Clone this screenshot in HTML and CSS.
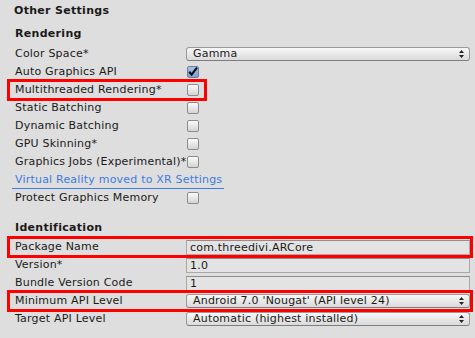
FILE: index.html
```html
<!DOCTYPE html>
<html lang="en">
  <head>
    <meta charset="UTF-8" />
    <meta name="viewport" content="width=device-width, initial-scale=1.0" />
    <title>Player Settings - Other Settings</title>
    <link rel="stylesheet" href="styles.css">
  </head>
  <body>
    <div class="panel">
      <div class="title">Other Settings</div>

      <div class="section-title first">Rendering</div>

      <div class="row">
        <span class="label">Color Space*</span>
        <div class="dropdown">
          <span>Gamma</span>
          <svg class="arrows" width="5" height="8" viewBox="0 0 5 8"><path d="M2.5 0 L5 3 L0 3 Z M0 5 L5 5 L2.5 8 Z" fill="#222"/></svg>
        </div>
      </div>
      <div class="row">
        <span class="label">Auto Graphics API</span>
        <span class="checkbox checked">
          <svg width="12" height="12" viewBox="0 0 12 12"><path d="M2.2 5.8 L4.6 8.6 L10 1.6" fill="none" stroke="#111" stroke-width="2.2"/></svg>
        </span>
      </div>
      <div class="row mark short">
        <span class="label">Multithreaded Rendering*</span>
        <span class="checkbox"></span>
      </div>
      <div class="row">
        <span class="label">Static Batching</span>
        <span class="checkbox"></span>
      </div>
      <div class="row">
        <span class="label">Dynamic Batching</span>
        <span class="checkbox"></span>
      </div>
      <div class="row">
        <span class="label">GPU Skinning*</span>
        <span class="checkbox"></span>
      </div>
      <div class="row">
        <span class="label">Graphics Jobs (Experimental)*</span>
        <span class="checkbox"></span>
      </div>
      <div class="row">
        <a class="link" href="#">Virtual Reality moved to XR Settings</a>
      </div>
      <div class="row">
        <span class="label">Protect Graphics Memory</span>
        <span class="checkbox"></span>
      </div>

      <div class="section-title">Identification</div>

      <div class="row mark">
        <span class="label">Package Name</span>
        <div class="textfield">com.threedivi.ARCore</div>
      </div>
      <div class="row">
        <span class="label">Version*</span>
        <div class="textfield">1.0</div>
      </div>
      <div class="row">
        <span class="label">Bundle Version Code</span>
        <div class="textfield">1</div>
      </div>
      <div class="row mark">
        <span class="label">Minimum API Level</span>
        <div class="dropdown">
          <span>Android 7.0 'Nougat' (API level 24)</span>
          <svg class="arrows" width="5" height="8" viewBox="0 0 5 8"><path d="M2.5 0 L5 3 L0 3 Z M0 5 L5 5 L2.5 8 Z" fill="#222"/></svg>
        </div>
      </div>
      <div class="row">
        <span class="label">Target API Level</span>
        <div class="dropdown">
          <span>Automatic (highest installed)</span>
          <svg class="arrows" width="5" height="8" viewBox="0 0 5 8"><path d="M2.5 0 L5 3 L0 3 Z M0 5 L5 5 L2.5 8 Z" fill="#222"/></svg>
        </div>
      </div>
    </div>
  </body>
</html>
```

FILE: styles.css
```css
* {
  box-sizing: border-box;
}
body {
  margin: 0;
  background-color: #dedede;
  font-family: "DejaVu Sans", Verdana, sans-serif;
  font-size: 11px;
  letter-spacing: 0.2px;
  color: #1a1a1a;
}
.panel {
  padding: 2px 4px 0 9px;
}
.title {
  font-weight: bold;
  line-height: 18px;
  padding-left: 5px;
  letter-spacing: 0.3px;
}
.section-title {
  font-weight: bold;
  line-height: 18px;
  padding-left: 6px;
  margin-top: 12px;
  margin-bottom: 1px;
  letter-spacing: 0.3px;
}
.section-title.first {
  margin-top: 5px;
  margin-bottom: 2px;
}
.row {
  display: flex;
  align-items: center;
  height: 18px;
  padding-right: 1px;
}
.row.mark {
  outline: 3px solid #f00;
  outline-offset: -1px;
  position: relative;
  z-index: 1;
}
.row.short {
  width: 196px;
}
.label {
  width: 177px;
  flex-shrink: 0;
  padding-left: 6px;
  white-space: nowrap;
  overflow: hidden;
  line-height: 18px;
}
.checkbox {
  width: 12px;
  height: 12px;
  margin-left: 1px;
  border: 1px solid #8c8c8c;
  border-radius: 2px;
  background: linear-gradient(#fbfbfb, #d4d4d4);
  display: flex;
  align-items: center;
  justify-content: center;
}
.checkbox svg {
  margin: -1px;
}
.checkbox.checked {
  border-color: #6f7f99;
  background: linear-gradient(#a9c2ea, #7f9fd4);
}
.dropdown {
  flex: 1;
  height: 14px;
  display: flex;
  align-items: center;
  justify-content: space-between;
  padding: 0 5px 0 6px;
  border: 1px solid #9a9a9a;
  border-bottom-color: #7e7e7e;
  border-radius: 3px;
  background: linear-gradient(#f7f7f7, #dadada);
  line-height: 12px;
  white-space: nowrap;
}
.textfield {
  flex: 1;
  height: 15px;
  padding: 0 3px;
  border: 1px solid #a9a9a9;
  border-top-color: #8e8e8e;
  background-color: #e3e3e3;
  line-height: 13px;
  white-space: nowrap;
}
.link {
  margin-left: 3px;
  padding: 0 2px 1px 3px;
  color: #3f7be0;
  text-decoration: none;
  border-bottom: 1px solid #3f7be0;
  line-height: 15px;
  white-space: nowrap;
}
```
